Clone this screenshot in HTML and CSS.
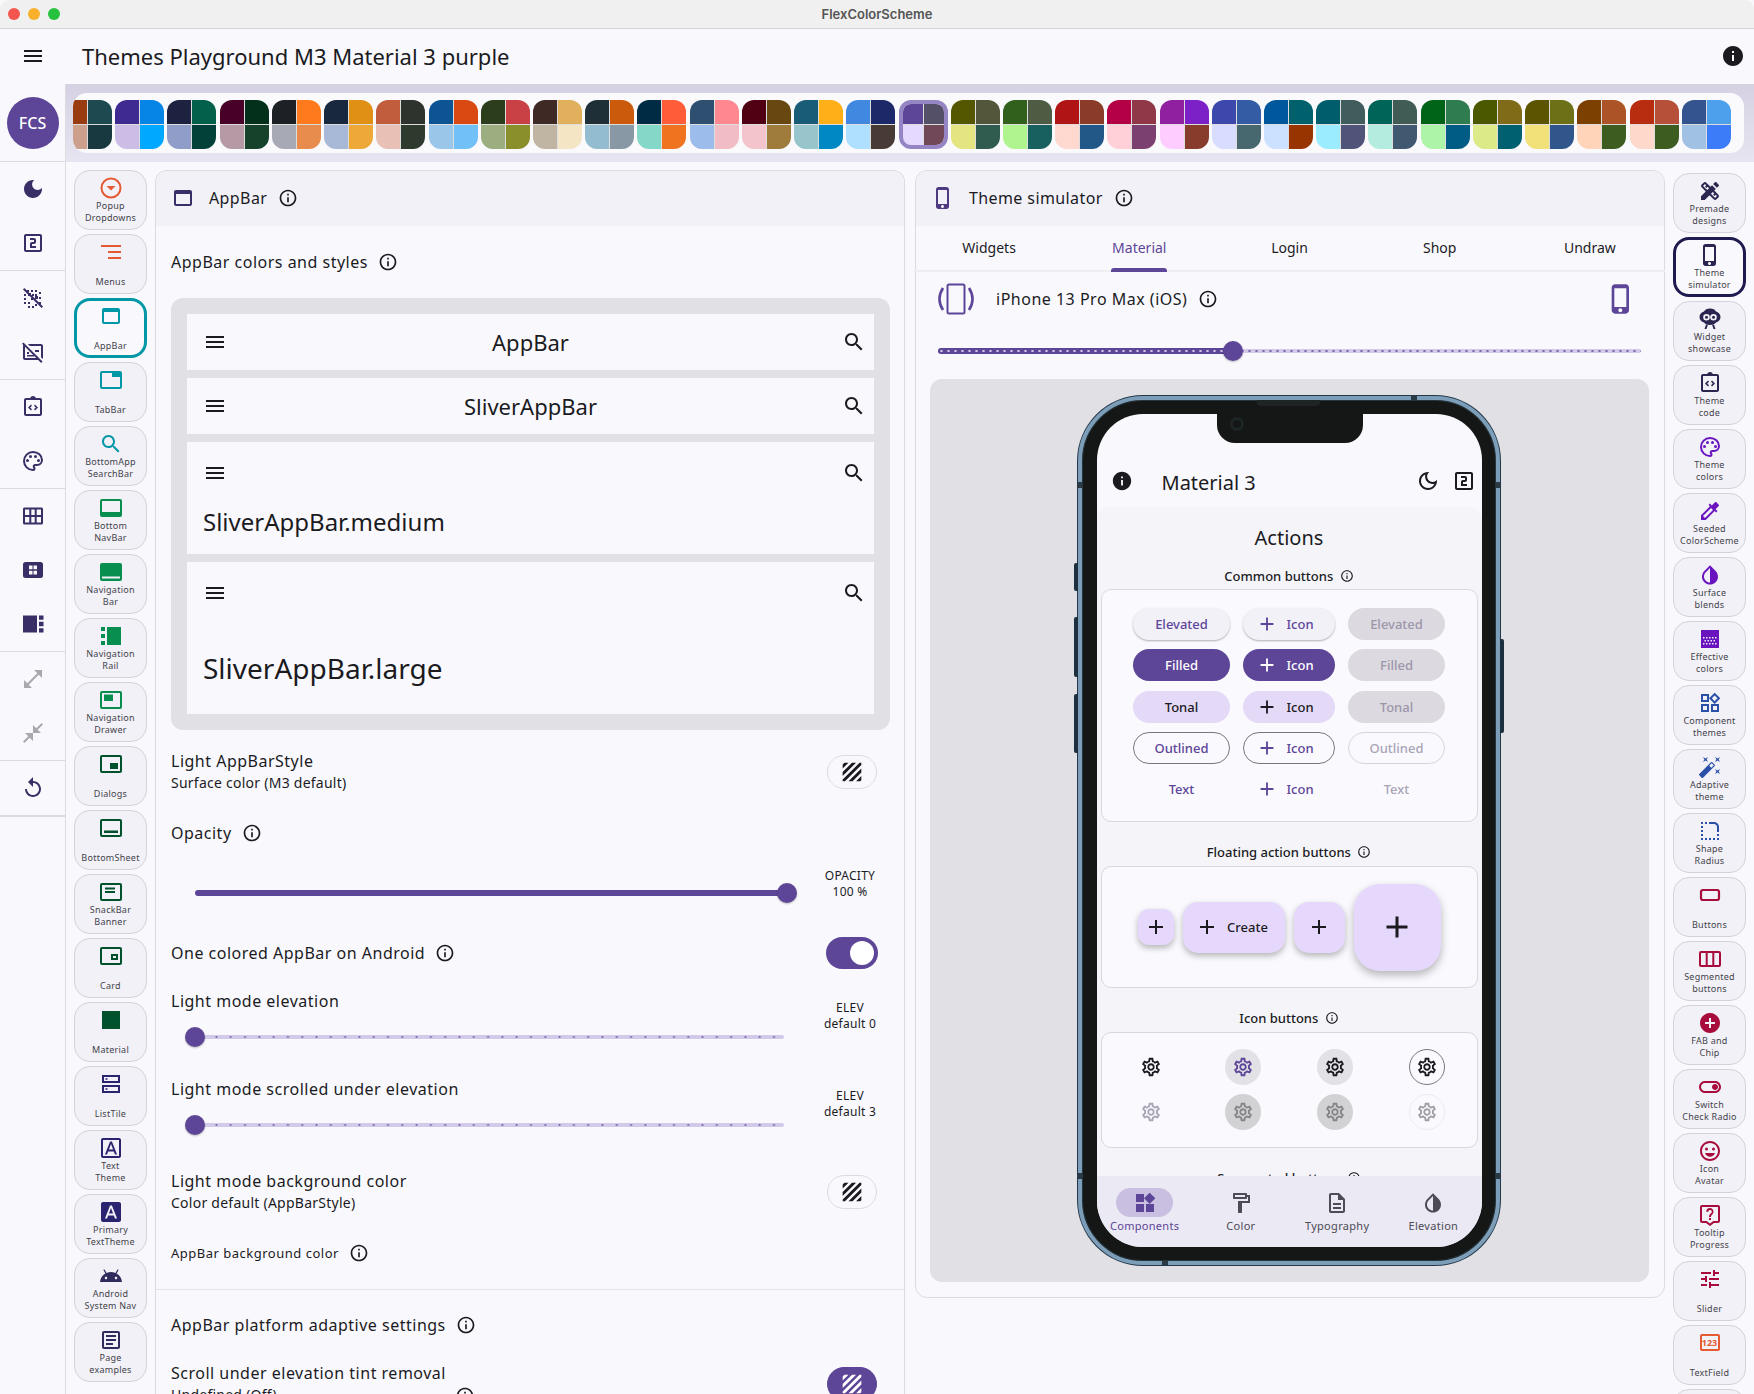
FILE: index.html
```html
<!DOCTYPE html>
<html lang="en">
<head>
  <meta charset="UTF-8">
  <title>FlexColorScheme</title>
  <link rel="stylesheet" href="styles.css">
</head>
<body>
  <!-- icon sprite -->
  <svg class="sprite" xmlns="http://www.w3.org/2000/svg">
    <symbol id="i-menu" viewBox="0 0 24 24"><path d="M3 18h18v-2H3v2zm0-5h18v-2H3v2zm0-7v2h18V6H3z"/></symbol>
    <symbol id="i-search" viewBox="0 0 24 24"><path d="M15.5 14h-.79l-.28-.27C15.41 12.59 16 11.11 16 9.5 16 5.91 13.09 3 9.5 3S3 5.91 3 9.5 5.91 16 9.5 16c1.61 0 3.09-.59 4.23-1.57l.27.28v.79l5 4.99L20.49 19l-4.99-5zm-6 0C7.01 14 5 11.99 5 9.5S7.01 5 9.5 5 14 7.01 14 9.5 11.99 14 9.5 14z"/></symbol>
    <symbol id="i-info" viewBox="0 0 24 24"><path d="M11 7h2v2h-2zm0 4h2v6h-2zm1-9C6.48 2 2 6.48 2 12s4.48 10 10 10 10-4.48 10-10S17.52 2 12 2zm0 18c-4.41 0-8-3.59-8-8s3.59-8 8-8 8 3.59 8 8-3.59 8-8 8z"/></symbol>
    <symbol id="i-info-fill" viewBox="0 0 24 24"><path d="M12 2C6.48 2 2 6.48 2 12s4.48 10 10 10 10-4.48 10-10S17.52 2 12 2zm1 15h-2v-6h2v6zm0-8h-2V7h2v2z"/></symbol>
    <symbol id="i-moon" viewBox="0 0 24 24"><path d="M12 3c-4.97 0-9 4.03-9 9s4.03 9 9 9 9-4.03 9-9c0-.46-.04-.92-.1-1.36-.98 1.37-2.58 2.26-4.4 2.26-2.98 0-5.4-2.42-5.4-5.4 0-1.81.89-3.42 2.26-4.4-.44-.06-.9-.1-1.36-.1z"/></symbol>
    <symbol id="i-moon-line" viewBox="0 0 24 24"><path d="M9.37 5.51C9.19 6.15 9.1 6.82 9.1 7.5c0 4.08 3.32 7.4 7.4 7.4.68 0 1.35-.09 1.99-.27C17.45 17.19 14.93 19 12 19c-3.86 0-7-3.14-7-7 0-2.93 1.81-5.45 4.37-6.49zM12 3c-4.97 0-9 4.03-9 9s4.03 9 9 9 9-4.03 9-9c0-.46-.04-.92-.1-1.36-.98 1.37-2.58 2.26-4.4 2.26-2.98 0-5.4-2.42-5.4-5.4 0-1.81.89-3.42 2.26-4.4C12.92 3.04 12.46 3 12 3z"/></symbol>
    <symbol id="i-two" viewBox="0 0 24 24"><path d="M19 3H5c-1.1 0-2 .9-2 2v14c0 1.1.9 2 2 2h14c1.1 0 2-.9 2-2V5c0-1.1-.9-2-2-2zm0 16H5V5h14v14zm-4-4h-4v-2h2c1.1 0 2-.89 2-2V9c0-1.11-.9-2-2-2H9v2h4v2h-2c-1.1 0-2 .89-2 2v4h6v-2z"/></symbol>
    <symbol id="i-grain-off" viewBox="0 0 24 24"><path d="M6 4h2v2H6zm4 0h2v2h-2zm4 0h2v2h-2zm4 2h2v2h-2zM3 8h2v2H3zm11 0h2v2h-2zm4 3h2v2h-2zM3 12h2v2H3zm7 0h2v2h-2zm-3 4h2v2H7zm-4 0h2v2H3zm11 2h2v2h-2zm-7 2h2v2H7zm4 0h2v2h-2zm7-4h2v2h-2zm-7-8h2v2h-2z"/><path d="M3.4 2 22 20.6 20.6 22 2 3.4z"/><path d="M7 7h3v3H7zm7 3h3v3h-3z"/></symbol>
    <symbol id="i-subs-off" viewBox="0 0 24 24"><path d="M20 4H6.83l2 2H20v11.17l1.76 1.76c.15-.28.24-.59.24-.93V6c0-1.1-.9-2-2-2zM1.04 3.87l1.2 1.2C2.09 5.35 2 5.66 2 6v12c0 1.1.9 2 2 2h13.17l2.96 2.96 1.41-1.41L2.45 2.45 1.04 3.87zM4 6.83L15.17 18H4V6.83z"/><path d="M6 12h2v2H6zm0 3h7v1.6H6zm8-5h4v2h-4z"/></symbol>
    <symbol id="i-code" viewBox="0 0 24 24"><path d="M19 3h-4.18C14.4 1.84 13.3 1 12 1s-2.4.84-2.82 2H5c-1.1 0-2 .9-2 2v14c0 1.1.9 2 2 2h14c1.1 0 2-.9 2-2V5c0-1.1-.9-2-2-2zm0 16H5V5h14v14zM11 14.2 9.2 12.5 11 10.8 10 9.5l-3 3 3 3zm2 0 1 1.3 3-3-3-3-1 1.3 1.8 1.7z"/></symbol>
    <symbol id="i-palette" viewBox="0 0 24 24"><path fill="none" stroke="currentColor" stroke-width="2" d="M12 3a9 9 0 0 0 0 18c.83 0 1.5-.67 1.5-1.5 0-.39-.15-.74-.39-1.01-.23-.26-.38-.61-.38-.99 0-.83.67-1.5 1.5-1.5H16c2.76 0 5-2.24 5-5 0-4.42-4.03-8-9-8z"/><circle cx="6.5" cy="11.5" r="1.5"/><circle cx="9.5" cy="7.5" r="1.5"/><circle cx="14.5" cy="7.5" r="1.5"/><circle cx="17.5" cy="11.5" r="1.5"/></symbol>
    <symbol id="i-grid" viewBox="0 0 24 24"><path fill-rule="evenodd" d="M3.5 3.500h17A1.500 1.500 0 0 1 22 5v14a1.500 1.500 0 0 1-1.500 1.500h-17A1.500 1.500 0 0 1 2 19V5a1.500 1.500 0 0 1 1.500-1.500zM4 5.500V11h4.300V5.500zm6.300 0V11h3.400V5.500zm5.400 0V11H20V5.500zM4 13v5.500h4.300V13zm6.300 0v5.500h3.400V13zm5.400 0v5.500H20V13z"/></symbol>
    <symbol id="i-dash" viewBox="0 0 24 24"><path fill-rule="evenodd" d="M4.500 4h15A2.500 2.500 0 0 1 22 6.500v11a2.500 2.500 0 0 1-2.500 2.500h-15A2.500 2.500 0 0 1 2 17.500v-11A2.500 2.500 0 0 1 4.500 4zM8 7.500v3.800h3.500V7.500zm4.500 0v3.800H16V7.500zM8 12.700v3.800h3.500v-3.800zm4.500 0v3.800H16v-3.800z"/></symbol>
    <symbol id="i-quilt" viewBox="0 0 24 24"><path d="M2 3.500h14v17H2zM18 3.500h4.500v4.300H18zM18 9.800h4.500v4.400H18zM18 16.200h4.500v4.300H18z"/></symbol>
    <symbol id="i-expand" viewBox="0 0 24 24"><path d="M21 11V3h-8l3.290 3.290-10 10L3 13v8h8l-3.290-3.290 10-10z"/></symbol>
    <symbol id="i-shrink" viewBox="0 0 24 24"><path d="M22 3.410l-5.290 5.290L20 12h-8V4l3.290 3.290L20.590 2 22 3.410zM3.410 22l5.290-5.290L12 20v-8H4l3.290 3.290L2 20.590 3.410 22z"/></symbol>
    <symbol id="i-replay" viewBox="0 0 24 24"><path d="M12 5V1L7 6l5 5V7c3.310 0 6 2.690 6 6s-2.690 6-6 6-6-2.690-6-6H4c0 4.420 3.580 8 8 8s8-3.580 8-8-3.580-8-8-8z"/></symbol>
    <symbol id="i-web" viewBox="0 0 24 24"><path d="M19 4H5c-1.110 0-2 .9-2 2v12c0 1.100.89 2 2 2h14c1.100 0 2-.9 2-2V6c0-1.100-.89-2-2-2zm0 14H5V8h14v10z"/></symbol>
    <symbol id="i-phone" viewBox="0 0 24 24"><path d="M15.500 1h-8C6.120 1 5 2.120 5 3.500v17C5 21.880 6.120 23 7.500 23h8c1.380 0 2.500-1.120 2.500-2.500v-17C18 2.120 16.880 1 15.500 1zm-4 21c-.83 0-1.500-.67-1.500-1.500s.67-1.500 1.500-1.500 1.500.67 1.500 1.500-.67 1.500-1.500 1.500zm4.500-4H7V4h9v14z"/></symbol>
    <symbol id="i-rotate" viewBox="0 0 36 36"><rect x="9.500" y="3.500" width="17" height="29" rx="1.500" fill="none" stroke="currentColor" stroke-width="2"/><path fill="none" stroke="currentColor" stroke-width="2.600" d="M5 7C.5 14 .5 22 5 29M31 7c4.500 7 4.500 15 0 22"/></symbol>
    <symbol id="i-popup" viewBox="0 0 24 24"><circle cx="12" cy="12" r="9.500" fill="none" stroke="currentColor" stroke-width="2"/><path d="M7.500 10l4.500 4.500 4.500-4.500z"/></symbol>
    <symbol id="i-menus" viewBox="0 0 24 24"><path d="M2 5h20v2H2zm7 6h13v2H9zm0 6h13v2H9z"/></symbol>
    <symbol id="i-tab" viewBox="0 0 24 24"><path d="M21 3H3c-1.100 0-2 .9-2 2v14c0 1.100.9 2 2 2h18c1.100 0 2-.9 2-2V5c0-1.100-.9-2-2-2zm0 16H3V5h10v4h8v10z"/></symbol>
    <symbol id="i-bnav" viewBox="0 0 24 24"><path fill-rule="evenodd" d="M3 3h18a2 2 0 0 1 2 2v14a2 2 0 0 1-2 2H3a2 2 0 0 1-2-2V5a2 2 0 0 1 2-2zm0 2v11h18V5z"/></symbol>
    <symbol id="i-nbar" viewBox="0 0 24 24"><path fill-rule="evenodd" d="M3 3h18a2 2 0 0 1 2 2v14a2 2 0 0 1-2 2H3a2 2 0 0 1-2-2V5a2 2 0 0 1 2-2zm0 13.500v2h18v-2z"/></symbol>
    <symbol id="i-rail" viewBox="0 0 24 24"><path d="M8 3h14v18H8zM2 3h4v4H2zm0 7h4v4H2zm0 7h4v4H2z" /></symbol>
    <symbol id="i-drawer" viewBox="0 0 24 24"><path fill-rule="evenodd" d="M3 3h18a2 2 0 0 1 2 2v14a2 2 0 0 1-2 2H3a2 2 0 0 1-2-2V5a2 2 0 0 1 2-2zm0 2v14h18V5zM5 6.500h9v6.500H5z"/></symbol>
    <symbol id="i-dialog" viewBox="0 0 24 24"><path d="M19 11h-8v6h8v-6zm2-8H3c-1.100 0-2 .9-2 2v14c0 1.100.9 1.980 2 1.980h18c1.100 0 2-.88 2-1.980V5c0-1.100-.9-2-2-2zm0 16.010H3V4.980h18v14.030z"/></symbol>
    <symbol id="i-sheet" viewBox="0 0 24 24"><path d="M21 3H3c-1.100 0-2 .9-2 2v14c0 1.100.9 2 2 2h18c1.100 0 2-.9 2-2V5c0-1.100-.9-2-2-2zm0 16H3V5h18v14zM5 14.500h14V17H5z"/></symbol>
    <symbol id="i-snack" viewBox="0 0 24 24"><path d="M21 3H3c-1.100 0-2 .9-2 2v14c0 1.100.9 2 2 2h18c1.100 0 2-.9 2-2V5c0-1.100-.9-2-2-2zm0 16H3V5h18v14zM6 7.500h10v2H6zm0 3.500h10v2H6z"/></symbol>
    <symbol id="i-card" viewBox="0 0 24 24"><path fill-rule="evenodd" d="M21 3H3c-1.100 0-2 .9-2 2v14c0 1.100.9 2 2 2h18c1.100 0 2-.9 2-2V5c0-1.100-.9-2-2-2zm0 16H3V5h18v14zM12 10h7v6h-7zm2 2v2h3v-2z"/></symbol>
    <symbol id="i-square" viewBox="0 0 24 24"><path d="M3 3h18v18H3z"/></symbol>
    <symbol id="i-list" viewBox="0 0 24 24"><path fill-rule="evenodd" d="M3 3h18v8H3zm2 2v4h14V5zm1.500 1.300h2v1.400h-2zM3 13h18v8H3zm2 2v4h14v-4zm1.500 1.300h2v1.400h-2z"/></symbol>
    <symbol id="i-text" viewBox="0 0 24 24"><path d="M9.170 15.500h5.640l1.140 3h2.090l-5.110-13h-1.860l-5.110 13h2.090l1.120-3zM12 7.980l2.070 5.520H9.930L12 7.980zM20 2H4c-1.100 0-2 .9-2 2v16c0 1.100.9 2 2 2h16c1.100 0 2-.9 2-2V4c0-1.100-.9-2-2-2zm0 18H4V4h16v16z"/></symbol>
    <symbol id="i-text-fill" viewBox="0 0 24 24"><path d="M20 2H4c-1.100 0-2 .9-2 2v16c0 1.100.9 2 2 2h16c1.100 0 2-.9 2-2V4c0-1.100-.9-2-2-2zm-4.050 16.500l-1.140-3H9.170l-1.120 3H5.960l5.110-13h1.860l5.110 13h-2.090zm-6.020-5h4.130L12 7.980 9.930 13.500z"/></symbol>
    <symbol id="i-android" viewBox="0 0 24 24"><path d="M17.600 9.480l1.840-3.180c.16-.31.04-.69-.26-.85-.29-.15-.65-.06-.83.22l-1.880 3.240c-2.860-1.210-6.080-1.210-8.940 0L5.650 5.670c-.19-.29-.58-.38-.87-.2-.28.18-.37.54-.22.83L6.400 9.480C3.300 11.250 1.280 14.440 1 18h22c-.28-3.560-2.300-6.750-5.400-8.520zM7 15.250c-.69 0-1.250-.56-1.250-1.250s.56-1.250 1.250-1.250 1.250.56 1.250 1.250-.56 1.250-1.250 1.250zm10 0c-.69 0-1.250-.56-1.250-1.250s.56-1.250 1.250-1.250 1.250.56 1.250 1.250-.56 1.250-1.250 1.250z"/></symbol>
    <symbol id="i-page" viewBox="0 0 24 24"><path d="M19 5v14H5V5h14m0-2H5c-1.100 0-2 .9-2 2v14c0 1.100.9 2 2 2h14c1.100 0 2-.9 2-2V5c0-1.100-.9-2-2-2zM14 17H7v-2h7v2zm3-4H7v-2h10v2zm0-4H7V7h10v2z"/></symbol>
    <symbol id="i-design" viewBox="0 0 24 24"><path d="M16.240 11.510l1.570-1.570-3.750-3.750-1.570 1.570-4.140-4.130c-.78-.78-2.050-.78-2.830 0l-1.900 1.900c-.78.78-.78 2.050 0 2.830l4.130 4.130L3 17.250V21h3.750l4.760-4.760 4.130 4.130c.95.95 2.230.6 2.830 0l1.900-1.900c.78-.78.78-2.050 0-2.830l-4.130-4.130zm-7.060-.44L5.040 6.940l1.890-1.900L8.200 6.310 7.020 7.500l1.410 1.410 1.190-1.190 1.450 1.450-1.890 1.900zm7.880 7.890l-4.130-4.140 1.900-1.900 1.450 1.450-1.190 1.190 1.410 1.410 1.190-1.190 1.270 1.270-1.900 1.910zM20.710 7.040a.996.996 0 0 0 0-1.410l-2.340-2.340c-.47-.47-1.120-.29-1.410 0l-1.830 1.830 3.750 3.750 1.830-1.830z"/></symbol>
    <symbol id="i-widget" viewBox="0 0 24 24"><path fill-rule="evenodd" d="M12 1.500c3 0 5 1 6 3 2.500.5 4.500 2.800 4.500 5.500s-2 5-4.500 5.500c-1 1.500-3 2.500-6 2.500s-5-1-6-2.500C3.500 15 1.500 12.700 1.500 10S3.500 5 6 4.500c1-2 3-3 6-3zM8.500 7a3.300 3.300 0 1 0 0 6.600 3.300 3.300 0 0 0 0-6.600zm7 0a3.300 3.300 0 1 0 0 6.600 3.300 3.300 0 0 0 0-6.600z"/><circle cx="8.500" cy="10.300" r="1.500"/><circle cx="15.500" cy="10.300" r="1.500"/><path d="M8 17.500h2l-1.500 4.500h-2zm6 0h2l1.500 4.500h-2z"/></symbol>
    <symbol id="i-colorize" viewBox="0 0 24 24"><path d="M20.710 5.630l-2.340-2.340c-.39-.39-1.020-.39-1.410 0l-3.120 3.120-1.930-1.910-1.410 1.410 1.420 1.420L3 16.250V21h4.750l8.920-8.920 1.420 1.420 1.410-1.410-1.920-1.920 3.120-3.120c.4-.4.4-1.030.01-1.420zM6.920 19L5 17.080l8.060-8.060 1.920 1.920L6.920 19z"/></symbol>
    <symbol id="i-blend" viewBox="0 0 24 24"><path d="M17.660 7.930L12 2.270 6.340 7.930c-3.120 3.120-3.120 8.190 0 11.310C7.900 20.800 9.950 21.580 12 21.580c2.050 0 4.100-.78 5.660-2.340 3.120-3.120 3.120-8.190 0-11.310zM12 19.590c-1.600 0-3.110-.62-4.240-1.760C6.620 16.690 6 15.190 6 13.590s.62-3.110 1.760-4.240L12 5.100v14.490z"/></symbol>
    <symbol id="i-effective" viewBox="0 0 24 24"><path fill-rule="evenodd" d="M3 3h18v18H3zm2 7v1.500h1.500V10zm3 0v1.500h1.500V10zm3 0v1.500h1.500V10zm3 0v1.500h1.500V10zm3 0v1.500h1.500V10zM6.500 13v1.500H8V13zm3 0v1.500H11V13zm3 0v1.500H14V13zm3 0v1.500h1.500V13zM5 16v1.500h1.500V16zm3 0v1.500h1.500V16zm3 0v1.500h1.500V16zm3 0v1.500h1.500V16zm3 0v1.500h1.500V16z"/></symbol>
    <symbol id="i-comp" viewBox="0 0 24 24"><path d="M16.660 4.520l2.830 2.830-2.830 2.830-2.830-2.830 2.830-2.830M9 5v4H5V5h4m10 10v4h-4v-4h4M9 15v4H5v-4h4m7.660-13.310L11 7.340 16.660 13l5.660-5.660-5.660-5.650zM11 3H3v8h8V3zm10 10h-8v8h8v-8zm-10 0H3v8h8v-8z"/></symbol>
    <symbol id="i-wand" viewBox="0 0 24 24"><path d="M7.500 5.600L10 7 8.600 4.500 10 2 7.500 3.400 5 2l1.400 2.500L5 7zm12 9.800L17 14l1.400 2.500L17 19l2.500-1.400L22 19l-1.400-2.500L22 14zM22 2l-2.500 1.400L17 2l1.400 2.500L17 7l2.500-1.400L22 7l-1.400-2.500zm-7.630 5.290a.996.996 0 0 0-1.410 0L1.290 18.960c-.39.39-.39 1.020 0 1.410l2.340 2.340c.39.39 1.020.39 1.410 0L16.700 11.050c.39-.39.39-1.020 0-1.410l-2.330-2.350zm-1.030 5.490l-2.120-2.120 2.440-2.440 2.120 2.120-2.440 2.440z"/></symbol>
    <symbol id="i-corner" viewBox="0 0 24 24"><path d="M19 19h2v2h-2v-2zm0-2h2v-2h-2v2zM3 13h2v-2H3v2zm0 4h2v-2H3v2zm0-8h2V7H3v2zm0-4h2V3H3v2zm4 0h2V3H7v2zm8 16h2v-2h-2v2zm-4 0h2v-2h-2v2zm-4 0h2v-2H7v2zm-4 0h2v-2H3v2zM21 8c0-2.760-2.240-5-5-5h-5v2h5c1.650 0 3 1.350 3 3v5h2V8z"/></symbol>
    <symbol id="i-button" viewBox="0 0 24 24"><rect x="3" y="7" width="18" height="10" rx="2" fill="none" stroke="currentColor" stroke-width="2.200"/></symbol>
    <symbol id="i-segment" viewBox="0 0 24 24"><path fill-rule="evenodd" d="M3 4h18a2 2 0 0 1 2 2v12a2 2 0 0 1-2 2H3a2 2 0 0 1-2-2V6a2 2 0 0 1 2-2zm0 2v12h4.700V6zm6.700 0v12h4.600V6zm6.600 0v12H21V6z"/></symbol>
    <symbol id="i-add-circle" viewBox="0 0 24 24"><path d="M12 2C6.480 2 2 6.480 2 12s4.480 10 10 10 10-4.480 10-10S17.520 2 12 2zm5 11h-4v4h-2v-4H7v-2h4V7h2v4h4v2z"/></symbol>
    <symbol id="i-switch" viewBox="0 0 24 24"><path d="M17 6H7c-3.310 0-6 2.690-6 6s2.690 6 6 6h10c3.310 0 6-2.690 6-6s-2.690-6-6-6zm0 10H7c-2.210 0-4-1.790-4-4s1.790-4 4-4h10c2.210 0 4 1.790 4 4s-1.790 4-4 4zm0-7c-1.660 0-3 1.340-3 3s1.340 3 3 3 3-1.340 3-3-1.340-3-3-3z"/></symbol>
    <symbol id="i-smile" viewBox="0 0 24 24"><path d="M11.990 2C6.470 2 2 6.480 2 12s4.470 10 9.990 10C17.520 22 22 17.520 22 12S17.520 2 11.990 2zM12 20c-4.420 0-8-3.580-8-8s3.580-8 8-8 8 3.580 8 8-3.580 8-8 8z"/><circle cx="8.500" cy="10" r="1.500"/><circle cx="15.500" cy="10" r="1.500"/><path d="M7 14h10c-.8 2.300-2.700 3.700-5 3.700S7.800 16.300 7 14z"/></symbol>
    <symbol id="i-tooltip" viewBox="0 0 24 24"><path d="M20 2H4c-1.100 0-2 .9-2 2v14c0 1.100.9 2 2 2h4l4 3 4-3h4c1.100 0 2-.9 2-2V4c0-1.100-.9-2-2-2zm0 16h-4.700L12 20.500 8.700 18H4V4h16v14z"/><path d="M11 15h2v2h-2zm1-10a3.800 3.800 0 0 0-3.800 3.800h2a1.800 1.800 0 1 1 3 1.300c-1 .9-2.200 1.700-2.200 3.900h2c0-1.500.9-2.100 1.800-2.900A3.800 3.800 0 0 0 12 5z"/></symbol>
    <symbol id="i-tune" viewBox="0 0 24 24"><path d="M3 17v2h6v-2H3zM3 5v2h10V5H3zm10 16v-2h8v-2h-8v-2h-2v6h2zM7 9v2H3v2h4v2h2V9H7zm14 4v-2H11v2h10zm-6-4h2V7h4V5h-4V3h-2v6z"/></symbol>
    <symbol id="i-add" viewBox="0 0 24 24"><path d="M19 13h-6v6h-2v-6H5v-2h6V5h2v6h6v2z"/></symbol>
    <symbol id="i-gear" viewBox="0 0 24 24"><path d="M19.430 12.980c.04-.32.07-.64.07-.98 0-.34-.03-.66-.07-.98l2.110-1.650c.19-.15.24-.42.12-.64l-2-3.460c-.09-.16-.26-.25-.44-.25-.06 0-.12.01-.17.03l-2.490 1c-.52-.4-1.080-.73-1.690-.98l-.38-2.650C14.460 2.180 14.250 2 14 2h-4c-.25 0-.46.18-.49.42l-.38 2.650c-.61.25-1.170.59-1.690.98l-2.490-1c-.06-.02-.12-.03-.18-.03-.17 0-.34.09-.43.25l-2 3.460c-.13.22-.07.49.12.64l2.110 1.650c-.04.32-.07.65-.07.98 0 .33.03.66.07.98l-2.110 1.650c-.19.15-.24.42-.12.64l2 3.460c.09.16.26.25.44.25.06 0 .12-.01.17-.03l2.490-1c.52.4 1.080.73 1.690.98l.38 2.650c.03.24.24.42.49.42h4c.25 0 .46-.18.49-.42l.38-2.650c.61-.25 1.170-.59 1.690-.98l2.490 1c.06.02.12.03.18.03.17 0 .34-.09.43-.25l2-3.460c.12-.22.07-.49-.12-.64l-2.110-1.650zm-1.980-1.710c.04.31.05.52.05.73 0 .21-.02.43-.05.73l-.14 1.130.89.7 1.080.84-.7 1.210-1.270-.51-1.040-.42-.9.68c-.43.32-.84.56-1.250.73l-1.060.43-.16 1.130-.2 1.350h-1.400l-.19-1.350-.16-1.130-1.060-.43c-.43-.18-.83-.41-1.230-.71l-.91-.7-1.060.43-1.270.51-.7-1.210 1.080-.84.89-.7-.14-1.130c-.03-.31-.05-.54-.05-.74s.02-.43.05-.73l.14-1.130-.89-.7-1.080-.84.7-1.210 1.270.51 1.040.42.9-.68c.43-.32.84-.56 1.250-.73l1.060-.43.16-1.130.2-1.350h1.390l.19 1.350.16 1.130 1.060.43c.43.18.83.41 1.230.71l.91.7 1.060-.43 1.270-.51.7 1.210-1.070.85-.89.7.14 1.130zM12 8c-2.210 0-4 1.790-4 4s1.790 4 4 4 4-1.790 4-4-1.790-4-4-4zm0 6c-1.100 0-2-.9-2-2s.9-2 2-2 2 .9 2 2-.9 2-2 2z"/></symbol>
    <symbol id="i-widgets" viewBox="0 0 24 24"><path d="M13 13v8h8v-8h-8zM3 21h8v-8H3v8zM3 3v8h8V3H3zm13.660-1.310L11 7.340 16.660 13l5.660-5.660-5.660-5.650z"/></symbol>
    <symbol id="i-paint" viewBox="0 0 24 24"><path d="M18 4V3c0-.55-.45-1-1-1H5c-.55 0-1 .45-1 1v4c0 .55.45 1 1 1h12c.55 0 1-.45 1-1V6h1v4H9v11c0 .55.45 1 1 1h2c.55 0 1-.45 1-1v-9h8V4h-3zm-2 2H6V4h10v2z"/></symbol>
    <symbol id="i-doc" viewBox="0 0 24 24"><path d="M8 16h8v2H8zm0-4h8v2H8zm6-10H6c-1.100 0-2 .9-2 2v16c0 1.100.89 2 1.990 2H18c1.100 0 2-.9 2-2V8l-6-6zm4 18H6V4h7v5h5v11z"/></symbol>
    <symbol id="i-hatch" viewBox="0 0 24 24"><path d="M4 5.500 5.500 4H9L4 9zM4 12l8-8h3.500L4 15.500zM4 18.500 18.500 4H20v2L6 20H4zM9 20 20 9v3.500L12.500 20zM15.500 20l4.500-4.500V19l-1 1z"/></symbol>
  </svg>

  <header class="titlebar">
    <div class="lights"><i class="light red"></i><i class="light amber"></i><i class="light green"></i></div>
    <div class="titlebar-name">FlexColorScheme</div>
  </header>

  <header class="appbar">
    <svg class="ic appbar-menu"><use href="#i-menu"/></svg>
    <h1 class="appbar-title">Themes Playground M3 Material 3 purple</h1>
    <svg class="ic appbar-info"><use href="#i-info-fill"/></svg>
  </header>

  <div class="layout">
    <nav class="rail">
      <div class="rail-logo"><div class="avatar">FCS</div></div>
      <div class="rail-group">
        <div class="rail-item"><svg class="ic"><use href="#i-moon"/></svg></div>
        <div class="rail-item"><svg class="ic"><use href="#i-two"/></svg></div>
      </div>
      <div class="rail-group">
        <div class="rail-item"><svg class="ic"><use href="#i-grain-off"/></svg></div>
        <div class="rail-item"><svg class="ic"><use href="#i-subs-off"/></svg></div>
      </div>
      <div class="rail-group">
        <div class="rail-item"><svg class="ic"><use href="#i-code"/></svg></div>
        <div class="rail-item"><svg class="ic"><use href="#i-palette"/></svg></div>
      </div>
      <div class="rail-group">
        <div class="rail-item"><svg class="ic"><use href="#i-grid"/></svg></div>
        <div class="rail-item"><svg class="ic"><use href="#i-dash"/></svg></div>
        <div class="rail-item"><svg class="ic"><use href="#i-quilt"/></svg></div>
      </div>
      <div class="rail-group">
        <div class="rail-item muted"><svg class="ic"><use href="#i-expand"/></svg></div>
        <div class="rail-item muted"><svg class="ic"><use href="#i-shrink"/></svg></div>
      </div>
      <div class="rail-group last">
        <div class="rail-item"><svg class="ic"><use href="#i-replay"/></svg></div>
      </div>
    </nav>

    <div class="main">
      <div class="strip">
        <div class="strip-inner">
          <div class="swatches">
            <div class="sw" style="--a:#9a3c12;--b:#1d4a50;--c:#cca08c;--d:#17393f"></div>
            <div class="sw" style="--a:#3f2a92;--b:#0685e6;--c:#cbbde6;--d:#00a8ff"></div>
            <div class="sw" style="--a:#1c2240;--b:#03604a;--c:#909dc9;--d:#01413a"></div>
            <div class="sw" style="--a:#480028;--b:#03301a;--c:#b59aa6;--d:#16422c"></div>
            <div class="sw" style="--a:#1d2126;--b:#ff7a1c;--c:#a7aab5;--d:#e78c4d"></div>
            <div class="sw" style="--a:#18283e;--b:#e09015;--c:#a8b9d8;--d:#eea838"></div>
            <div class="sw" style="--a:#c15c3d;--b:#2e332e;--c:#e8c0b5;--d:#2f3a2e"></div>
            <div class="sw" style="--a:#0d5495;--b:#d94a12;--c:#9ac6ea;--d:#72c0f8"></div>
            <div class="sw" style="--a:#2c3d1c;--b:#c94045;--c:#9cad80;--d:#8a8f2c"></div>
            <div class="sw" style="--a:#3e2925;--b:#e0b05c;--c:#c0b4a2;--d:#f4e6c4"></div>
            <div class="sw" style="--a:#1f2f38;--b:#cc5a0c;--c:#94bcd0;--d:#8898a4"></div>
            <div class="sw" style="--a:#002b44;--b:#ff5c3a;--c:#84d8c8;--d:#f07420"></div>
            <div class="sw" style="--a:#2f4f70;--b:#ff8890;--c:#9cbcec;--d:#f2bcc4"></div>
            <div class="sw" style="--a:#500012;--b:#684810;--c:#f4c4cc;--d:#a07c3c"></div>
            <div class="sw" style="--a:#185c78;--b:#ffb018;--c:#98c4cc;--d:#0088c4"></div>
            <div class="sw" style="--a:#4088e0;--b:#1c2868;--c:#b0e0ff;--d:#483a34"></div>
            <div class="sw selected" style="--a:#5d4598;--b:#535068;--c:#e6d9ff;--d:#704858"></div>
            <div class="sw" style="--a:#545600;--b:#54563c;--c:#e4e480;--d:#305c50"></div>
            <div class="sw" style="--a:#30601c;--b:#4e5c44;--c:#b0f490;--d:#186060"></div>
            <div class="sw" style="--a:#b01414;--b:#8a3c28;--c:#ffd8d0;--d:#225888"></div>
            <div class="sw" style="--a:#b40044;--b:#903848;--c:#ffd0d8;--d:#7c4070"></div>
            <div class="sw" style="--a:#9020a0;--b:#7c20c8;--c:#ffccff;--d:#883c2c"></div>
            <div class="sw" style="--a:#3c48ac;--b:#345ca4;--c:#d8dcff;--d:#486870"></div>
            <div class="sw" style="--a:#00589c;--b:#00606c;--c:#cce0ff;--d:#983400"></div>
            <div class="sw" style="--a:#005e6c;--b:#405c5c;--c:#9cecff;--d:#505478"></div>
            <div class="sw" style="--a:#006458;--b:#405c54;--c:#b4ece0;--d:#405870"></div>
            <div class="sw" style="--a:#006418;--b:#2e7c50;--c:#aef4a8;--d:#005c84"></div>
            <div class="sw" style="--a:#4c5800;--b:#806c18;--c:#dcea88;--d:#006070"></div>
            <div class="sw" style="--a:#5c5400;--b:#6e7018;--c:#f2e078;--d:#30568c"></div>
            <div class="sw" style="--a:#7c4000;--b:#ac5428;--c:#ffd4b8;--d:#3c5c20"></div>
            <div class="sw" style="--a:#b82c10;--b:#b65038;--c:#ffd8cc;--d:#3c5c20"></div>
            <div class="sw" style="--a:#34548f;--b:#4ca0ec;--c:#a0c0e4;--d:#3c7cf8"></div>
          </div>
        </div>
      </div>

      <div class="columns">
        <aside class="tiles tiles-left">
          <div class="tile orange"><svg class="ic"><use href="#i-popup"/></svg><span>Popup<br>Dropdowns</span></div>
          <div class="tile orange"><svg class="ic"><use href="#i-menus"/></svg><span>Menus</span></div>
          <div class="tile teal active-teal"><svg class="ic"><use href="#i-web"/></svg><span>AppBar</span></div>
          <div class="tile teal"><svg class="ic"><use href="#i-tab"/></svg><span>TabBar</span></div>
          <div class="tile teal"><svg class="ic"><use href="#i-search"/></svg><span>BottomApp<br>SearchBar</span></div>
          <div class="tile green"><svg class="ic"><use href="#i-bnav"/></svg><span>Bottom<br>NavBar</span></div>
          <div class="tile green"><svg class="ic"><use href="#i-nbar"/></svg><span>Navigation<br>Bar</span></div>
          <div class="tile green"><svg class="ic"><use href="#i-rail"/></svg><span>Navigation<br>Rail</span></div>
          <div class="tile green"><svg class="ic"><use href="#i-drawer"/></svg><span>Navigation<br>Drawer</span></div>
          <div class="tile forest"><svg class="ic"><use href="#i-dialog"/></svg><span>Dialogs</span></div>
          <div class="tile forest"><svg class="ic"><use href="#i-sheet"/></svg><span>BottomSheet</span></div>
          <div class="tile forest"><svg class="ic"><use href="#i-snack"/></svg><span>SnackBar<br>Banner</span></div>
          <div class="tile forest"><svg class="ic"><use href="#i-card"/></svg><span>Card</span></div>
          <div class="tile forest"><svg class="ic"><use href="#i-square"/></svg><span>Material</span></div>
          <div class="tile indigo"><svg class="ic"><use href="#i-list"/></svg><span>ListTile</span></div>
          <div class="tile indigo"><svg class="ic"><use href="#i-text"/></svg><span>Text<br>Theme</span></div>
          <div class="tile indigo"><svg class="ic"><use href="#i-text-fill"/></svg><span>Primary<br>TextTheme</span></div>
          <div class="tile dusk"><svg class="ic"><use href="#i-android"/></svg><span>Android<br>System Nav</span></div>
          <div class="tile dusk"><svg class="ic"><use href="#i-page"/></svg><span>Page<br>examples</span></div>
        </aside>

        <section class="card card-left">
          <div class="card-head">
            <svg class="ic head-icon"><use href="#i-web"/></svg>
            <span class="head-title">AppBar</span>
            <svg class="ic-s info"><use href="#i-info"/></svg>
          </div>

          <div class="line sec-first">AppBar colors and styles <svg class="ic-s info"><use href="#i-info"/></svg></div>

          <div class="demo">
            <div class="bar bar-small">
              <svg class="ic"><use href="#i-menu"/></svg>
              <div class="bar-title">AppBar</div>
              <svg class="ic"><use href="#i-search"/></svg>
            </div>
            <div class="bar bar-small">
              <svg class="ic"><use href="#i-menu"/></svg>
              <div class="bar-title">SliverAppBar</div>
              <svg class="ic"><use href="#i-search"/></svg>
            </div>
            <div class="bar bar-medium">
              <div class="bar-top">
                <svg class="ic"><use href="#i-menu"/></svg>
                <svg class="ic"><use href="#i-search"/></svg>
              </div>
              <div class="bar-medium-title">SliverAppBar.medium</div>
            </div>
            <div class="bar bar-large">
              <div class="bar-top">
                <svg class="ic"><use href="#i-menu"/></svg>
                <svg class="ic"><use href="#i-search"/></svg>
              </div>
              <div class="bar-large-title">SliverAppBar.large</div>
            </div>
          </div>

          <div class="list-row row-style">
            <div>
              <div class="row-title">Light AppBarStyle</div>
              <div class="row-sub">Surface color (M3 default)</div>
            </div>
            <div class="hatch-btn"><svg class="ic"><use href="#i-hatch"/></svg></div>
          </div>

          <div class="line row-opacity">Opacity <svg class="ic-s info"><use href="#i-info"/></svg></div>

          <div class="slider-row row-opacity-slider">
            <div class="slider-cell">
              <div class="track-full"><i class="thumb"></i></div>
            </div>
            <div class="slider-label">OPACITY<br>100 %</div>
          </div>

          <div class="list-row row-colored">
            <div class="line">One colored AppBar on Android <svg class="ic-s info"><use href="#i-info"/></svg></div>
            <div class="switch"><i></i></div>
          </div>

          <div class="elev-row row-elev1">
            <div class="elev-main">
              <div class="row-title">Light mode elevation</div>
              <div class="elev-slider"><div class="track-ticks"><i class="thumb start"></i></div></div>
            </div>
            <div class="slider-label">ELEV<br>default 0</div>
          </div>

          <div class="elev-row row-elev2">
            <div class="elev-main">
              <div class="row-title">Light mode scrolled under elevation</div>
              <div class="elev-slider"><div class="track-ticks"><i class="thumb start"></i></div></div>
            </div>
            <div class="slider-label">ELEV<br>default 3</div>
          </div>

          <div class="list-row row-bg">
            <div>
              <div class="row-title">Light mode background color</div>
              <div class="row-sub">Color default (AppBarStyle)</div>
            </div>
            <div class="hatch-btn"><svg class="ic"><use href="#i-hatch"/></svg></div>
          </div>

          <div class="small-line">AppBar background color <svg class="ic-s info"><use href="#i-info"/></svg></div>

          <hr class="divider">

          <div class="line row-platform">AppBar platform adaptive settings <svg class="ic-s info"><use href="#i-info"/></svg></div>

          <div class="list-row row-tint">
            <div class="tint-text">
              <div>
                <div class="row-title">Scroll under elevation tint removal</div>
                <div class="row-sub">Undefined (Off)</div>
              </div>
              <svg class="ic-s info"><use href="#i-info"/></svg>
            </div>
            <div class="hatch-btn on"><svg class="ic"><use href="#i-hatch"/></svg></div>
          </div>
        </section>

        <section class="card card-right">
          <div class="card-head">
            <svg class="ic head-icon phone-head"><use href="#i-phone"/></svg>
            <span class="head-title">Theme simulator</span>
            <svg class="ic-s info"><use href="#i-info"/></svg>
          </div>

          <div class="tabs">
            <div class="tab">Widgets</div>
            <div class="tab active">Material</div>
            <div class="tab">Login</div>
            <div class="tab">Shop</div>
            <div class="tab">Undraw</div>
          </div>

          <div class="device-row">
            <svg class="device-rotate"><use href="#i-rotate"/></svg>
            <span class="device-name">iPhone 13 Pro Max (iOS)</span>
            <svg class="ic-s info"><use href="#i-info"/></svg>
            <svg class="device-phone"><use href="#i-phone"/></svg>
          </div>

          <div class="device-slider">
            <div class="device-track"><i class="device-fill"></i><i class="thumb device-thumb"></i></div>
          </div>

          <div class="sim-panel">
            <div class="phone">
              <i class="side-btn l1"></i><i class="side-btn l2"></i><i class="side-btn l3"></i><i class="side-btn r1"></i>
              <i class="band bl1"></i><i class="band br1"></i><i class="band bl2"></i><i class="band br2"></i><i class="band bt"></i><i class="band bb"></i>
              <div class="notch"><i class="speaker"></i><i class="camera"></i></div>
              <div class="screen">
                <div class="phone-bar">
                  <svg class="ic-s pb-info"><use href="#i-info-fill"/></svg>
                  <span class="pb-title">Material 3</span>
                  <svg class="ic pb-moon"><use href="#i-moon-line"/></svg>
                  <svg class="ic pb-two"><use href="#i-two"/></svg>
                </div>
                <div class="phone-body">
                  <div class="actions">Actions</div>

                  <div class="ph-heading h-common">Common buttons <svg class="ic-xs"><use href="#i-info"/></svg></div>
                  <div class="ph-card btn-card">
                    <div class="btn elevated">Elevated</div>
                    <div class="btn elevated icon-btn"><svg class="ic-b"><use href="#i-add"/></svg>Icon</div>
                    <div class="btn disabled">Elevated</div>
                    <div class="btn filled">Filled</div>
                    <div class="btn filled icon-btn"><svg class="ic-b"><use href="#i-add"/></svg>Icon</div>
                    <div class="btn disabled">Filled</div>
                    <div class="btn tonal">Tonal</div>
                    <div class="btn tonal icon-btn"><svg class="ic-b"><use href="#i-add"/></svg>Icon</div>
                    <div class="btn disabled">Tonal</div>
                    <div class="btn outlined">Outlined</div>
                    <div class="btn outlined icon-btn"><svg class="ic-b"><use href="#i-add"/></svg>Icon</div>
                    <div class="btn outlined off">Outlined</div>
                    <div class="btn plain">Text</div>
                    <div class="btn plain icon-btn"><svg class="ic-b"><use href="#i-add"/></svg>Icon</div>
                    <div class="btn plain off">Text</div>
                  </div>

                  <div class="ph-heading">Floating action buttons <svg class="ic-xs"><use href="#i-info"/></svg></div>
                  <div class="ph-card fab-card">
                    <div class="fab small"><svg class="ic"><use href="#i-add"/></svg></div>
                    <div class="fab ext"><svg class="ic"><use href="#i-add"/></svg>Create</div>
                    <div class="fab regular"><svg class="ic"><use href="#i-add"/></svg></div>
                    <div class="fab large"><svg class="ic-l"><use href="#i-add"/></svg></div>
                  </div>

                  <div class="ph-heading">Icon buttons <svg class="ic-xs"><use href="#i-info"/></svg></div>
                  <div class="ph-card icon-card">
                    <div class="gear"><svg class="ic"><use href="#i-gear"/></svg></div>
                    <div class="gear g-filled"><svg class="ic"><use href="#i-gear"/></svg></div>
                    <div class="gear g-tonal"><svg class="ic"><use href="#i-gear"/></svg></div>
                    <div class="gear g-outlined"><svg class="ic"><use href="#i-gear"/></svg></div>
                    <div class="gear g-off"><svg class="ic"><use href="#i-gear"/></svg></div>
                    <div class="gear g-off-fill"><svg class="ic"><use href="#i-gear"/></svg></div>
                    <div class="gear g-off-fill"><svg class="ic"><use href="#i-gear"/></svg></div>
                    <div class="gear g-off-line"><svg class="ic"><use href="#i-gear"/></svg></div>
                  </div>

                  <div class="ph-heading">Segmented buttons <svg class="ic-xs"><use href="#i-info"/></svg></div>
                </div>
                <div class="phone-nav">
                  <div class="pn-item active"><div class="pn-pill"><svg class="ic"><use href="#i-widgets"/></svg></div><span>Components</span></div>
                  <div class="pn-item"><div class="pn-pill"><svg class="ic"><use href="#i-paint"/></svg></div><span>Color</span></div>
                  <div class="pn-item"><div class="pn-pill"><svg class="ic"><use href="#i-doc"/></svg></div><span>Typography</span></div>
                  <div class="pn-item"><div class="pn-pill"><svg class="ic"><use href="#i-blend"/></svg></div><span>Elevation</span></div>
                </div>
              </div>
            </div>
          </div>
        </section>

        <aside class="tiles tiles-right">
          <div class="tile dark"><svg class="ic"><use href="#i-design"/></svg><span>Premade<br>designs</span></div>
          <div class="tile dark active-dark"><svg class="ic"><use href="#i-phone"/></svg><span>Theme<br>simulator</span></div>
          <div class="tile dark"><svg class="ic"><use href="#i-widget"/></svg><span>Widget<br>showcase</span></div>
          <div class="tile dark"><svg class="ic"><use href="#i-code"/></svg><span>Theme<br>code</span></div>
          <div class="tile violet"><svg class="ic"><use href="#i-palette"/></svg><span>Theme<br>colors</span></div>
          <div class="tile violet"><svg class="ic"><use href="#i-colorize"/></svg><span>Seeded<br>ColorScheme</span></div>
          <div class="tile violet"><svg class="ic"><use href="#i-blend"/></svg><span>Surface<br>blends</span></div>
          <div class="tile violet"><svg class="ic"><use href="#i-effective"/></svg><span>Effective<br>colors</span></div>
          <div class="tile blue"><svg class="ic"><use href="#i-comp"/></svg><span>Component<br>themes</span></div>
          <div class="tile blue"><svg class="ic"><use href="#i-wand"/></svg><span>Adaptive<br>theme</span></div>
          <div class="tile blue"><svg class="ic"><use href="#i-corner"/></svg><span>Shape<br>Radius</span></div>
          <div class="tile crimson"><svg class="ic"><use href="#i-button"/></svg><span>Buttons</span></div>
          <div class="tile crimson"><svg class="ic"><use href="#i-segment"/></svg><span>Segmented<br>buttons</span></div>
          <div class="tile crimson"><svg class="ic"><use href="#i-add-circle"/></svg><span>FAB and<br>Chip</span></div>
          <div class="tile crimson"><svg class="ic"><use href="#i-switch"/></svg><span>Switch<br>Check Radio</span></div>
          <div class="tile crimson"><svg class="ic"><use href="#i-smile"/></svg><span>Icon<br>Avatar</span></div>
          <div class="tile crimson"><svg class="ic"><use href="#i-tooltip"/></svg><span>Tooltip<br>Progress</span></div>
          <div class="tile crimson"><svg class="ic"><use href="#i-tune"/></svg><span>Slider</span></div>
          <div class="tile orange"><div class="num-icon">123</div><span>TextField</span></div>
          <div class="tile orange"></div>
        </aside>
      </div>
    </div>
  </div>
</body>
</html>
```

FILE: styles.css
```css
/* General */
* {
  box-sizing: border-box;
}

body {
  margin: 0;
  width: 1754px;
  height: 1394px;
  overflow: hidden;
  background: #f9f9fd;
  color: #1b1b1f;
  font-family: "Noto Sans", sans-serif;
  display: flex;
  flex-direction: column;
}

.sprite {
  display: none;
}

.ic {
  width: 24px;
  height: 24px;
  fill: currentColor;
  flex: none;
}

.ic-s {
  width: 20px;
  height: 20px;
  fill: currentColor;
  flex: none;
}

.ic-xs {
  width: 14px;
  height: 14px;
  fill: currentColor;
  vertical-align: -2px;
  margin-left: 3px;
}

.ic-l {
  width: 36px;
  height: 36px;
  fill: currentColor;
}

.ic-b {
  width: 22px;
  height: 22px;
  fill: currentColor;
  margin-right: 8px;
}

/* Window title bar */
.titlebar {
  height: 29px;
  flex: none;
  background: #f0f0f0;
  border-bottom: 1px solid #d2d2d4;
  border-radius: 9px 9px 0 0;
  display: grid;
  grid-template-columns: 1fr auto 1fr;
  align-items: center;
}

.lights {
  display: flex;
  gap: 8px;
  padding-left: 8px;
}

.light {
  width: 12px;
  height: 12px;
  border-radius: 50%;
}

.red { background: #f4554e; }
.amber { background: #f9b12b; }
.green { background: #27c23d; }

.titlebar-name {
  font-family: Inter, sans-serif;
  font-size: 13px;
  font-weight: 600;
  color: #555;
}

/* App bar */
.appbar {
  height: 55px;
  flex: none;
  display: flex;
  align-items: center;
  padding: 0 9px 2px 21px;
}

.appbar-menu {
  margin-right: 37px;
}

.appbar-title {
  margin: 0;
  flex: 1;
  font-size: 22px;
  font-weight: 400;
}

/* Layout */
.layout {
  flex: 1;
  display: flex;
  min-height: 0;
}

.rail {
  width: 66px;
  flex: none;
  border-right: 1px solid #dcdce0;
  color: #3a2e66;
}

.rail-logo {
  height: 78px;
  display: flex;
  align-items: center;
  justify-content: center;
  border-bottom: 1px solid #dcdce0;
}

.avatar {
  width: 52px;
  height: 52px;
  border-radius: 50%;
  background: #5d4598;
  color: #fff;
  font-size: 16px;
  font-weight: 500;
  display: flex;
  align-items: center;
  justify-content: center;
}

.rail-group {
  border-bottom: 1px solid #dcdce0;
}

.rail-group.last {
  border-bottom-width: 2px;
}

.rail-item {
  height: 54px;
  display: flex;
  align-items: center;
  justify-content: center;
}

.rail-item.muted {
  color: #a9a9ad;
}

.main {
  flex: 1;
  min-width: 0;
  display: flex;
  flex-direction: column;
}

/* Theme swatches */
.strip {
  height: 78px;
  flex: none;
  padding: 9px 10px 9px 7px;
  background: linear-gradient(#d5d1e3, #e7e5f1);
}

.strip-inner {
  height: 60px;
  padding-top: 7px;
  background: #fafafd;
  border-radius: 14px;
  overflow: hidden;
}

.swatches {
  display: flex;
  gap: 3.23px;
  margin-left: -10px;
}

.sw {
  width: 49px;
  height: 49px;
  flex: none;
  border-radius: 12px;
  background:
    linear-gradient(var(--a), var(--a)) 0 0 / calc(50% - .5px) calc(50% - .5px) no-repeat,
    linear-gradient(var(--b), var(--b)) 100% 0 / calc(50% - .5px) calc(50% - .5px) no-repeat,
    linear-gradient(var(--c), var(--c)) 0 100% / calc(50% - .5px) calc(50% - .5px) no-repeat,
    linear-gradient(var(--d), var(--d)) 100% 100% / calc(50% - .5px) calc(50% - .5px) no-repeat;
  background-color: #ddd;
}

.sw.selected {
  border: 4px solid #9585c4;
  background-clip: padding-box;
}

.columns {
  flex: 1;
  min-height: 0;
  display: flex;
  padding-top: 8px;
}

/* Side tiles */
.tiles {
  width: 89px;
  flex: none;
  padding: 0 8px;
  display: flex;
  flex-direction: column;
  gap: 4px;
}

.tiles-right {
  padding-top: 3px;
}

.tile {
  height: 60px;
  flex: none;
  padding-top: 5px;
  background: #f2f1f8;
  border: 1px solid #d4d3d9;
  border-radius: 16px;
  display: flex;
  flex-direction: column;
  align-items: center;
}

.tile span {
  height: 24px;
  display: flex;
  align-items: flex-end;
  text-align: center;
  font-size: 9px;
  line-height: 12px;
  letter-spacing: .25px;
  color: #44434a;
}

.orange .ic { color: #e65a33; }
.teal .ic { color: #0097a7; }
.green .ic { color: #088f4f; }
.forest .ic { color: #00522c; }
.indigo .ic { color: #2a2470; }
.dusk .ic { color: #2f2b5c; }
.dark .ic { color: #2b2650; }
.violet .ic { color: #6a14c0; }
.blue .ic { color: #2a50a8; }
.crimson .ic { color: #a80c3c; }

.active-teal {
  border: 3px solid #0097a7;
  padding-top: 3px;
  background: #f9f9fd;
}

.active-dark {
  border: 3px solid #1f1a4f;
  padding-top: 3px;
  background: #f9f9fd;
}

.num-icon {
  width: 20px;
  height: 17px;
  margin: 3px 0 4px;
  border: 2px solid #e65a33;
  border-radius: 2px;
  color: #e65a33;
  font-size: 9px;
  font-weight: 700;
  line-height: 13px;
  text-align: center;
}

/* Cards */
.card {
  width: 750px;
  flex: none;
  border: 1px solid #dcdce0;
  border-bottom: none;
  border-radius: 12px 12px 0 0;
  background: #f9f9fd;
}

.card-left {
  margin-right: 10px;
  height: 1300px;
  font-size: 16px;
}

.card-right {
  height: 1128px;
  border-bottom: 1px solid #dcdce0;
  border-radius: 12px;
}

.card-head {
  height: 55px;
  padding: 0 0 1px 15px;
  display: flex;
  align-items: center;
  gap: 14px;
  background: #f2f1f8;
  border-radius: 12px 12px 0 0;
  font-size: 16px;
  letter-spacing: .4px;
}

.head-icon {
  color: #3a2e66;
}

.phone-head {
  color: #4d3a80;
}

.head-title {
  margin-right: -3px;
}

.info {
  color: #1b1b1f;
}

.line {
  display: flex;
  align-items: center;
  gap: 10px;
  height: 24px;
  padding-left: 15px;
  font-size: 16px;
  letter-spacing: .5px;
}

.sec-first {
  margin-top: 24px;
}

/* AppBar demo */
.demo {
  margin: 24px 14px 0 15px;
  padding: 16px;
  background: #e0e0e5;
  border-radius: 12px;
  display: flex;
  flex-direction: column;
  gap: 8px;
}

.bar {
  background: #f9f9fd;
}

.bar-small {
  height: 56px;
  padding: 0 8px 0 16px;
  display: flex;
  align-items: center;
}

.bar-title {
  flex: 1;
  margin-right: 8px;
  text-align: center;
  font-size: 22px;
}

.bar-medium {
  height: 112px;
}

.bar-large {
  height: 152px;
}

.bar-top {
  height: 62px;
  padding: 0 8px 0 16px;
  display: flex;
  align-items: center;
  justify-content: space-between;
}

.bar-medium-title {
  padding-left: 16px;
  font-size: 24px;
  line-height: 36px;
}

.bar-large-title {
  margin-top: 21px;
  padding-left: 16px;
  font-size: 28px;
  line-height: 46px;
}

/* List rows */
.list-row {
  display: flex;
  align-items: center;
  justify-content: space-between;
  padding-right: 27px;
}

.list-row > .line {
  padding-left: 15px;
}

.row-style {
  margin-top: 20px;
  padding-left: 15px;
}

.row-bg {
  margin-top: 21px;
  padding-left: 15px;
}

.row-title {
  font-size: 16px;
  line-height: 22px;
  letter-spacing: .5px;
}

.row-sub {
  font-size: 14px;
  line-height: 22px;
  letter-spacing: .25px;
}

.hatch-btn {
  width: 50px;
  height: 34px;
  border: 1px solid #dcdce0;
  border-radius: 17px;
  display: flex;
  align-items: center;
  justify-content: center;
}

.hatch-btn .ic {
  width: 28px;
  height: 28px;
}

.hatch-btn.on {
  background: #5d4598;
  border-color: #5d4598;
  color: #fff;
}

.row-opacity {
  margin-top: 27px;
}

.slider-row {
  display: flex;
  padding-left: 15px;
  margin-top: 23px;
}

.slider-cell {
  flex: 1;
  padding: 22px 23px 0 24px;
}

.slider-label {
  width: 80px;
  margin-right: 14px;
  text-align: center;
  font-size: 12px;
  line-height: 16px;
  letter-spacing: .25px;
}

.track-full {
  height: 6px;
  position: relative;
  background: #5d4598;
  border-radius: 3px;
}

.thumb {
  position: absolute;
  top: 50%;
  right: -10px;
  width: 20px;
  height: 20px;
  margin-top: -10px;
  background: #5d4598;
  border-radius: 50%;
  box-shadow: 0 1px 2px rgba(0, 0, 0, .25);
}

.thumb.start {
  right: auto;
  left: -10px;
}

.row-colored {
  margin-top: 37px;
  padding-right: 26px;
}

.switch {
  width: 52px;
  height: 32px;
  padding: 4px;
  background: #5d4598;
  border-radius: 16px;
  display: flex;
  justify-content: flex-end;
}

.switch i {
  width: 24px;
  height: 24px;
  background: #fff;
  border-radius: 50%;
}

.elev-row {
  display: flex;
  padding-left: 15px;
}

.row-elev1 {
  margin-top: 20px;
}

.row-elev2 {
  margin-top: 16px;
}

.row-elev1 .row-title,
.row-elev2 .row-title {
  line-height: 24px;
}

.elev-main {
  flex: 1;
}

.elev-row .slider-label {
  padding-top: 11px;
}

.elev-slider {
  height: 48px;
  padding: 22px 26px 0 24px;
}

.track-ticks {
  height: 4px;
  position: relative;
  border-radius: 2px;
  background:
    radial-gradient(circle, #7f6cb0 .9px, transparent 1.2px) 0 0 / 14.3px 4px repeat-x,
    #d2cae8;
}

.small-line {
  margin-top: 29px;
  height: 20px;
  padding-left: 15px;
  display: flex;
  align-items: center;
  gap: 10px;
  font-size: 13px;
  letter-spacing: .5px;
}

.divider {
  margin: 26px 0 0;
  border: none;
  border-top: 1px solid #e4e4e8;
}

.row-platform {
  margin-top: 23px;
}

.row-tint {
  margin-top: 25px;
  padding-left: 15px;
}

.tint-text {
  display: flex;
  align-items: flex-end;
  gap: 9px;
}

/* Theme simulator */
.tabs {
  height: 46px;
  margin: 0 -1px 0 -2px;
  display: flex;
  border-bottom: 2px solid #eeedf2;
}

.tab {
  flex: 1;
  position: relative;
  display: flex;
  align-items: center;
  justify-content: center;
  padding-bottom: 2px;
  font-size: 14px;
}

.tab.active {
  color: #5d4598;
}

.tab.active::after {
  content: "";
  position: absolute;
  left: 50%;
  bottom: -2px;
  width: 56px;
  height: 4px;
  margin-left: -28px;
  background: #5d4598;
  border-radius: 3px 3px 0 0;
}

.device-row {
  height: 54px;
  padding: 0 27px 0 22px;
  display: flex;
  align-items: center;
  color: #5d4598;
}

.device-rotate {
  width: 36px;
  height: 36px;
  fill: currentColor;
}

.device-name {
  margin: 0 11px 0 22px;
  font-size: 16px;
  letter-spacing: .5px;
  color: #1b1b1f;
}

.device-row .ic-s {
  flex: none;
  color: #1b1b1f;
}

.device-phone {
  width: 32px;
  height: 32px;
  margin-left: auto;
  fill: currentColor;
}

.device-slider {
  height: 50px;
  padding: 23px 23px 0 22px;
}

.device-track {
  height: 4px;
  position: relative;
  border-radius: 2px;
  background:
    radial-gradient(circle, #7f6cb0 1px, transparent 1.3px) 0 0 / 7px 4px repeat-x,
    #d2cae8;
}

.device-fill {
  position: absolute;
  left: 0;
  top: -1px;
  width: 295px;
  height: 6px;
  border-radius: 3px;
  background:
    radial-gradient(circle, #cfc6e6 1px, transparent 1.3px) 0 0 / 7px 6px repeat-x,
    #5d4598;
}

.device-thumb {
  left: 285px;
  right: auto;
}

.sim-panel {
  margin: 3px 15px 0 14px;
  height: 903px;
  padding-right: 2px;
  background: #e0e0e5;
  border-radius: 12px;
  display: flex;
  align-items: center;
  justify-content: center;
}

/* Phone */
.phone {
  width: 422px;
  height: 869px;
  position: relative;
  padding: 14px 14px 14px 15px;
  background: #141716;
  border: 4px solid #7d9eb8;
  border-radius: 65px;
  box-shadow: inset 0 0 0 1px #26343c, 0 0 0 1px #24384a;
}

.side-btn {
  position: absolute;
  width: 4px;
  background: #1c3040;
}

.side-btn.l1 { left: -8px; top: 163px; height: 28px; border-radius: 2px 0 0 2px; }
.side-btn.l2 { left: -8px; top: 217px; height: 60px; border-radius: 2px 0 0 2px; }
.side-btn.l3 { left: -8px; top: 294px; height: 59px; border-radius: 2px 0 0 2px; }
.side-btn.r1 { right: -8px; top: 239px; height: 94px; border-radius: 0 2px 2px 0; }

.band {
  position: absolute;
  background: #2b3b46;
}

.band.bl1 { left: -4px; top: 82px; width: 4px; height: 6px; }
.band.br1 { right: -4px; top: 82px; width: 4px; height: 6px; }
.band.bl2 { left: -4px; top: 773px; width: 4px; height: 6px; }
.band.br2 { right: -4px; top: 773px; width: 4px; height: 6px; }
.band.bt { top: -4px; left: 329px; width: 6px; height: 4px; }
.band.bb { bottom: -4px; left: 80px; width: 6px; height: 4px; }

.notch {
  position: absolute;
  left: 135px;
  top: 14px;
  width: 146px;
  height: 29px;
  background: #141716;
  border-radius: 0 0 18px 18px;
  z-index: 1;
}

.speaker {
  position: absolute;
  left: 40px;
  top: -14px;
  width: 63px;
  height: 6px;
  background: #1e2324;
  border-radius: 0 0 4px 4px;
}

.camera {
  position: absolute;
  left: 13px;
  top: 3px;
  width: 14px;
  height: 14px;
  border: 3px solid #1d2526;
  border-radius: 50%;
}

.screen {
  height: 100%;
  display: flex;
  flex-direction: column;
  overflow: hidden;
  background: #f9f9fd;
  border-radius: 46px;
}

.phone-bar {
  height: 93px;
  flex: none;
  padding: 52px 6px 0 14px;
  display: flex;
  align-items: flex-start;
  color: #1b1b1f;
}

.pb-info {
  margin-top: 4px;
  width: 22px;
  height: 22px;
}

.pb-title {
  margin: 2px 0 0 29px;
  flex: 1;
  font-size: 20px;
  line-height: 30px;
}

.pb-moon {
  margin: 3px 12px 0 0;
}

.pb-two {
  margin-top: 3px;
}

.phone-body {
  flex: 1;
  min-height: 0;
  overflow: hidden;
  padding: 0 4px;
  background: #f5f5f9;
  border-radius: 12px 12px 0 0;
}

.actions {
  margin-top: 17px;
  text-align: center;
  font-size: 20px;
  line-height: 28px;
}

.ph-heading {
  margin-top: 21px;
  text-align: center;
  font-size: 13px;
  font-weight: 500;
  line-height: 18px;
}

.h-common {
  margin-top: 15px;
}

.ph-card {
  margin-top: 5px;
  background: #fafafe;
  border: 1px solid #d8d8dd;
  border-radius: 10px;
}

/* Common buttons */
.btn-card {
  height: 233px;
  margin-top: 4px;
  padding-top: 18px;
  display: grid;
  grid-template-columns: 97px 92px 97px;
  grid-auto-rows: 32px;
  column-gap: 13px;
  row-gap: 9.3px;
  justify-content: center;
}

.btn {
  border-radius: 16px;
  display: flex;
  align-items: center;
  justify-content: center;
  font-size: 13px;
  font-weight: 500;
  color: #5d4598;
}

.icon-btn {
  padding-right: 8px;
}

.elevated {
  background: #f2f1f8;
  box-shadow: 0 1px 2px rgba(0, 0, 0, .3);
}

.filled {
  background: #5d4598;
  color: #fff;
}

.tonal {
  background: #e4d9f6;
  color: #1c1a24;
}

.outlined {
  border: 1px solid #78767c;
}

.disabled {
  background: #dcd9e0;
  color: #9c96aa;
}

.outlined.off {
  border-color: #d6d4da;
  color: #a9a4b6;
}

.plain.off {
  color: #a9a4b6;
}

/* FABs */
.fab-card {
  height: 122px;
  display: flex;
  align-items: center;
  justify-content: center;
  gap: 9px;
}

.fab {
  background: #e6d8fc;
  box-shadow: 0 3px 6px rgba(0, 0, 0, .28);
  display: flex;
  align-items: center;
  justify-content: center;
}

.fab.small { width: 36px; height: 36px; border-radius: 11px; }
.fab.ext { width: 102px; height: 51px; padding-right: 4px; border-radius: 15px; gap: 8px; font-size: 13px; font-weight: 500; }
.fab.regular { width: 51px; height: 51px; border-radius: 15px; }
.fab.large { width: 87px; height: 87px; border-radius: 26px; box-shadow: 0 4px 9px rgba(0, 0, 0, .28); }

/* Icon buttons */
.icon-card {
  height: 116px;
  padding: 16px 3px 0;
  display: grid;
  grid-template-columns: repeat(4, 1fr);
  grid-auto-rows: 36px;
  row-gap: 9px;
  justify-items: center;
}

.gear {
  width: 36px;
  height: 36px;
  border-radius: 50%;
  display: flex;
  align-items: center;
  justify-content: center;
}

.gear .ic {
  width: 22px;
  height: 22px;
}

.g-filled { background: #e2e1e6; color: #5d4598; }
.g-tonal { background: #e2e1e6; }
.g-outlined { border: 1px solid #78767c; }
.g-off { color: #a9a4b6; }
.g-off-fill { background: #d2d2d4; color: #858488; }
.g-off-line { border: 1px solid #ececf0; color: #a0a0a4; }

/* Phone navigation bar */
.phone-nav {
  height: 71px;
  flex: none;
  padding-top: 12px;
  display: flex;
  background: #ebe9f4;
}

.pn-item {
  flex: 1;
  display: flex;
  flex-direction: column;
  align-items: center;
  font-size: 11px;
  line-height: 18px;
  letter-spacing: .3px;
  color: #4d4b55;
}

.pn-pill {
  width: 57px;
  height: 29px;
  border-radius: 15px;
  display: flex;
  align-items: center;
  justify-content: center;
}

.pn-item.active {
  color: #5d4598;
}

.pn-item.active .pn-pill {
  background: #c9bfe0;
}
```
